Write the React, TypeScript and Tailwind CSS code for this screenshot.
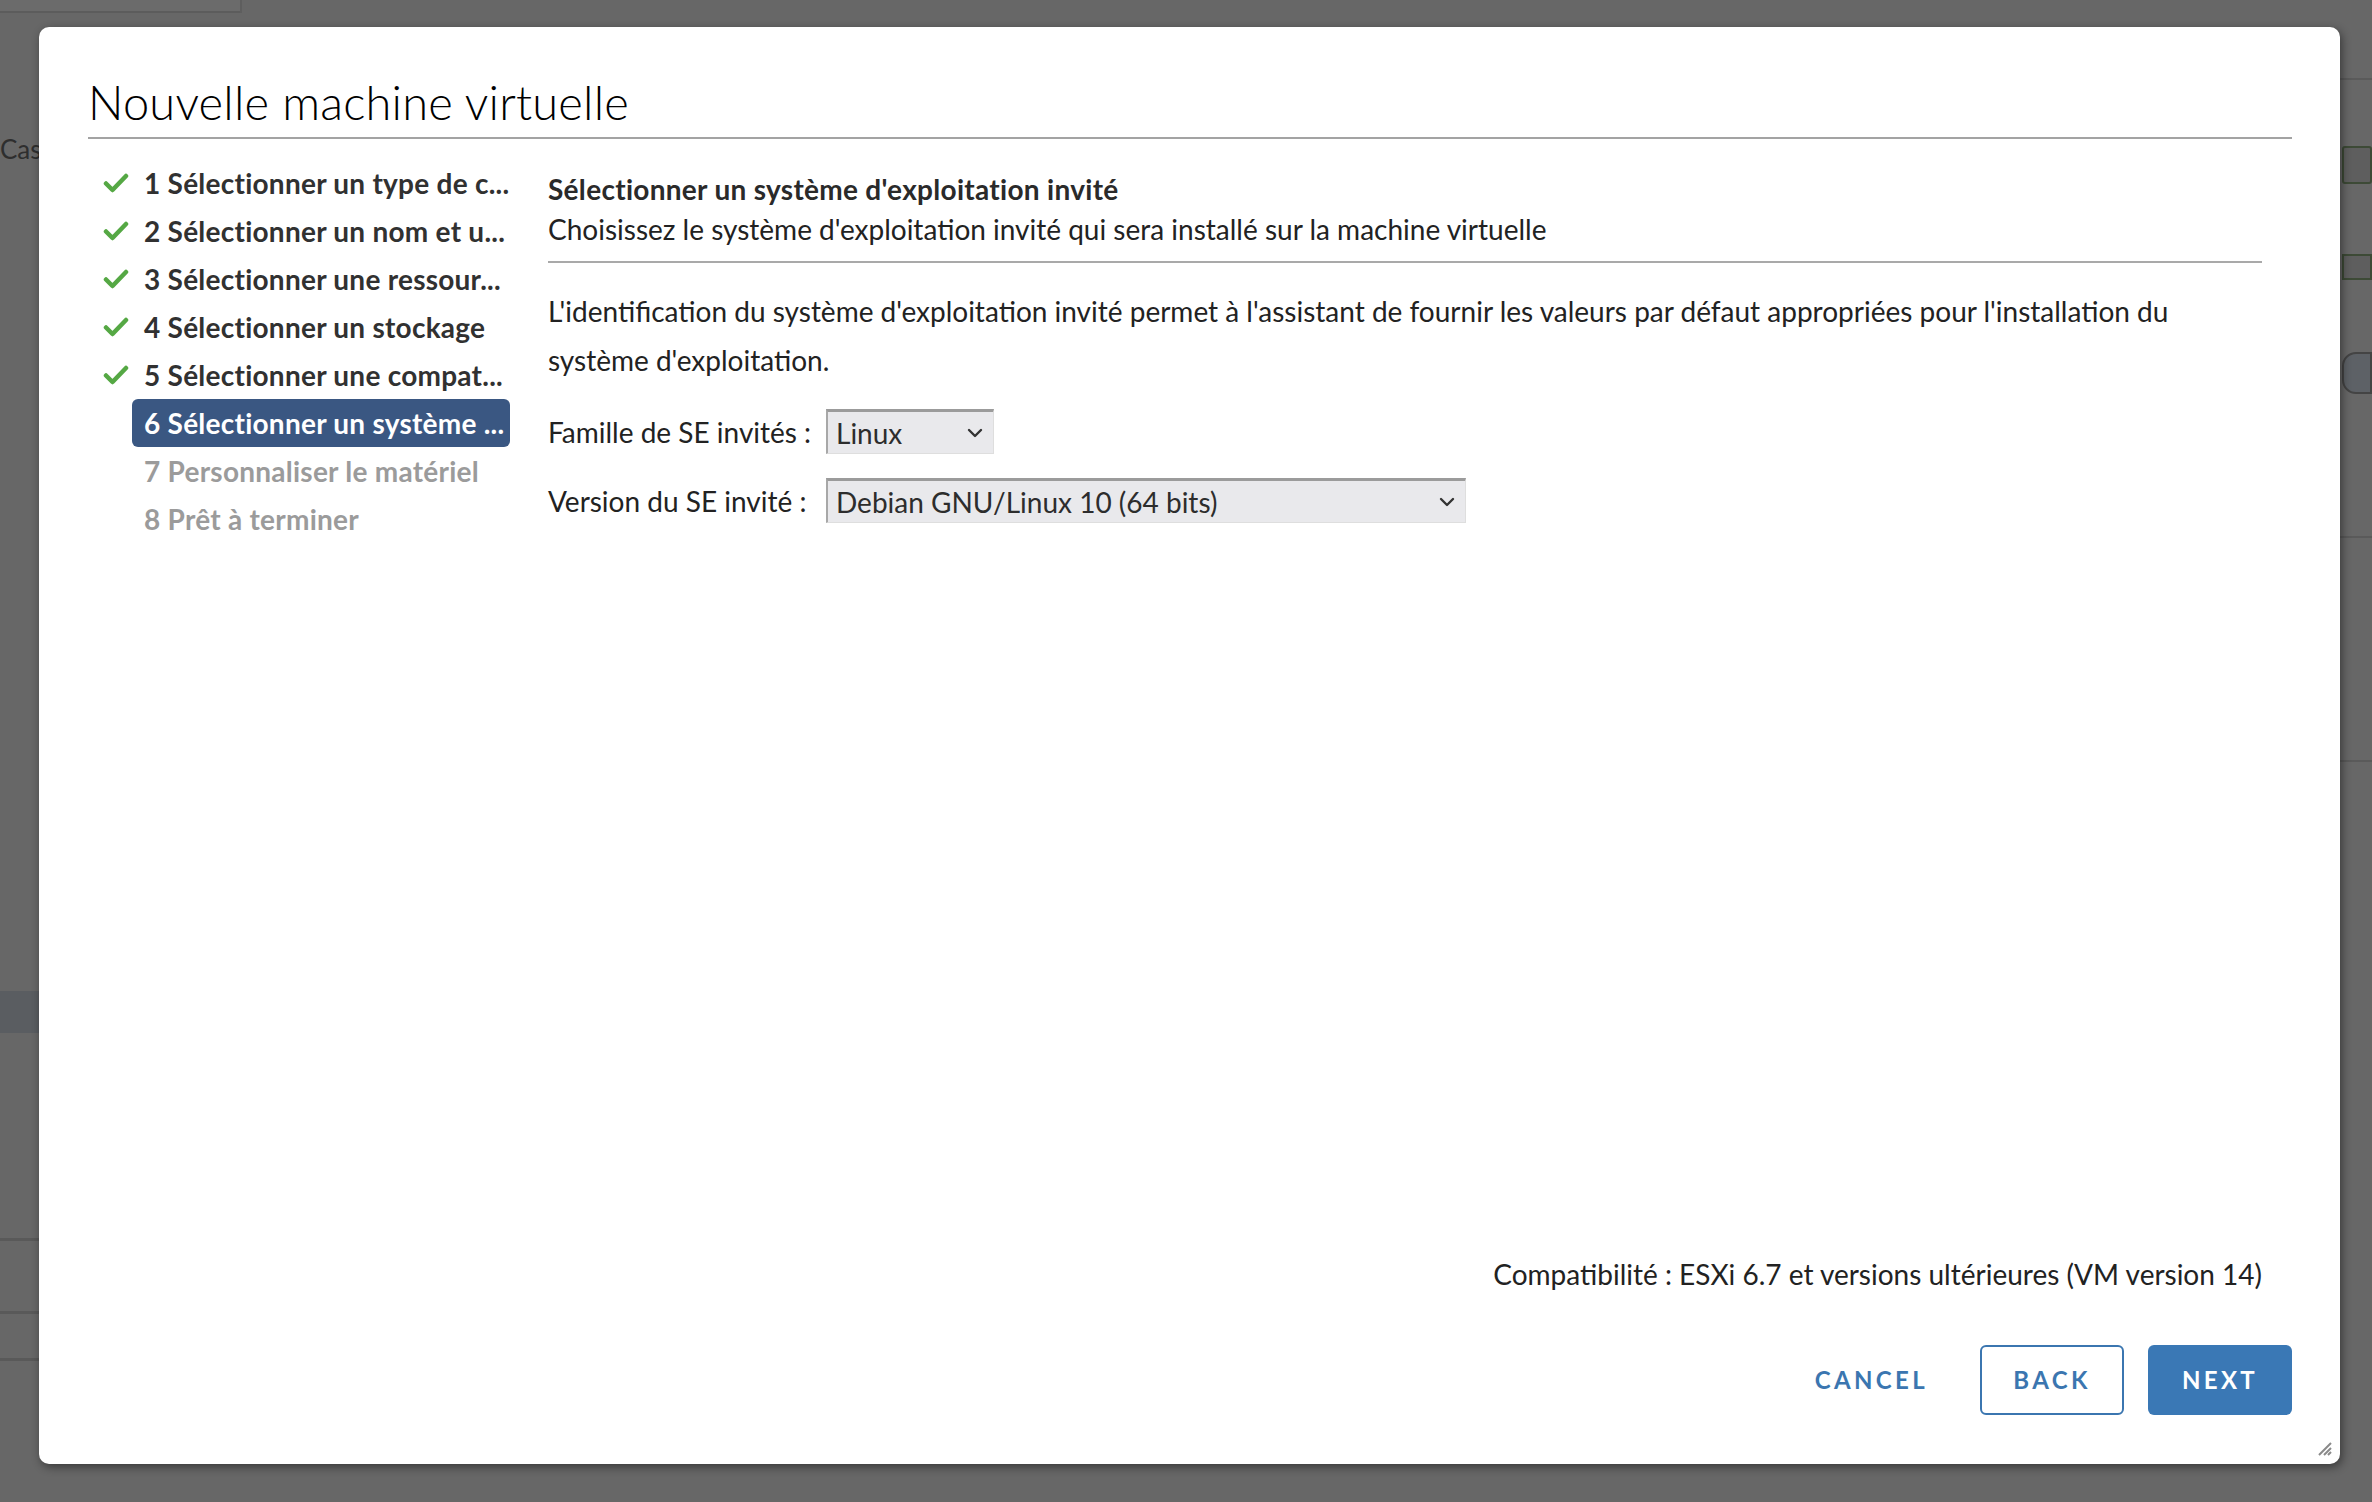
import React from 'react';

const steps = [
  { n: 1, label: 'Sélectionner un type de c...', state: 'done' },
  { n: 2, label: 'Sélectionner un nom et u...', state: 'done' },
  { n: 3, label: 'Sélectionner une ressour...', state: 'done' },
  { n: 4, label: 'Sélectionner un stockage', state: 'done' },
  { n: 5, label: 'Sélectionner une compat...', state: 'done' },
  { n: 6, label: 'Sélectionner un système ...', state: 'active' },
  { n: 7, label: 'Personnaliser le matériel', state: 'todo' },
  { n: 8, label: 'Prêt à terminer', state: 'todo' },
];

const Check = () => (
  <svg width="26" height="22" viewBox="0 0 26 22" fill="none">
    <path d="M3 11.5 L9.5 18 L23 4" stroke="#55a844" strokeWidth="4.5" strokeLinecap="round" strokeLinejoin="round" />
  </svg>
);

const Chevron = () => (
  <svg width="16" height="10" viewBox="0 0 16 10" fill="none">
    <path d="M2 2 L8 8 L14 2" stroke="#333" strokeWidth="2.4" strokeLinecap="round" strokeLinejoin="round" />
  </svg>
);

const FakeSelect = ({ value, width }: { value: string; width: string }) => (
  <div
    className={`${width} h-[45px] flex items-center justify-between pl-[8px] pr-[10px] bg-[#e9e9ec] border-t-[3px] border-l-[2px] border-r border-b border-t-[#9b9b9b] border-l-[#a8a8a8] border-r-[#dedede] border-b-[#dedede] text-[28px] text-[#2d2d2d]`}
  >
    <span>{value}</span>
    <Chevron />
  </div>
);

export default function App() {
  return (
    <div className="relative w-[2372px] h-[1502px] overflow-hidden bg-[#676767] font-['Lato','Liberation_Sans',sans-serif]">
      {/* dimmed page behind the dialog */}
      <div className="flex h-[13px]">
        <div className="w-[240px] bg-[#6b6b6b] border-b-2 border-[#5c5c5c]" />
        <div className="w-[2px] bg-[#5e5e5e]" />
      </div>
      <div className="absolute left-0 top-[130px] text-[26px] text-[#2e2e2e]">Cas-</div>
      <div className="absolute left-0 top-[991px] w-[40px] h-[42px] bg-[#5a5d61]" />
      <div className="absolute left-0 top-[1238px] w-[40px] h-[3px] bg-[#595959]" />
      <div className="absolute left-0 top-[1311px] w-[40px] h-[3px] bg-[#595959]" />
      <div className="absolute left-0 top-[1358px] w-[40px] h-[3px] bg-[#595959]" />
      <div className="absolute right-0 top-[78px] w-[32px] h-[2px] bg-[#5a5a5a]" />
      <div className="absolute right-0 top-[146px] w-[30px] h-[38px] border-2 border-[#3d4a36] bg-[#5e5e5e] rounded-[3px]" />
      <div className="absolute right-0 top-[254px] w-[30px] h-[26px] border-2 border-[#3d4a36] bg-[#5e5e5e]" />
      <div className="absolute right-0 top-[352px] w-[30px] h-[42px] rounded-l-[14px] border-2 border-[#444] bg-[#5d6166]" />
      <div className="absolute right-0 top-[536px] w-[32px] h-[2px] bg-[#5a5a5a]" />
      <div className="absolute right-0 top-[760px] w-[32px] h-[2px] bg-[#5a5a5a]" />

      {/* dialog */}
      <div className="absolute left-[39px] top-[27px] w-[2301px] h-[1437px] bg-white rounded-[10px] shadow-[2px_3px_10px_rgba(0,0,0,0.45)] flex flex-col pl-[49px] pr-[48px] pt-[46px] pb-[49px]">
        <div className="border-b-2 border-[#a3a3a3] pb-[6px]">
          <h1 className="text-[47px] font-light leading-[58px] text-black tracking-[0.2px]">Nouvelle machine virtuelle</h1>
        </div>

        <div className="flex flex-1 pt-[20px]">
          {/* steps */}
          <ul className="w-[422px] shrink-0 flex flex-col">
            {steps.map((s) => (
              <li key={s.n} className="flex items-center h-[48px]">
                <div className="w-[44px] flex items-center justify-end pr-[3px]">{s.state === 'done' && <Check />}</div>
                <div
                  className={`w-[378px] h-[48px] flex items-center pl-[12px] rounded-[6px] text-[28px] font-bold tracking-[0.25px] whitespace-nowrap overflow-hidden ${
                    s.state === 'active'
                      ? 'bg-[#3a5782] text-white'
                      : s.state === 'todo'
                      ? 'text-[#9b9b9b]'
                      : 'text-[#313131]'
                  }`}
                >
                  {s.n} {s.label}
                </div>
              </li>
            ))}
          </ul>

          {/* main panel */}
          <div className="flex-1 flex flex-col ml-[38px] mr-[30px] pt-[10px] text-[#222]">
            <div className="border-b-2 border-[#a9a9a9] pb-[12px]">
              <div className="text-[28px] font-bold tracking-[0.3px] leading-[40px] text-[#2a2a2a]">Sélectionner un système d'exploitation invité</div>
              <div className="text-[28px] leading-[40px]">Choisissez le système d'exploitation invité qui sera installé sur la machine virtuelle</div>
            </div>

            <p className="mt-[24px] text-[28px] leading-[49px]">
              L'identification du système d'exploitation invité permet à l'assistant de fournir les valeurs par défaut appropriées pour l'installation du système d'exploitation.
            </p>

            <div className="flex items-center gap-[12px] mt-[24px] text-[28px]">
              <span className="w-[266px] shrink-0 whitespace-nowrap">Famille de SE invités :</span>
              <FakeSelect value="Linux" width="w-[168px]" />
            </div>
            <div className="flex items-center gap-[12px] mt-[24px] text-[28px]">
              <span className="w-[266px] shrink-0 whitespace-nowrap">Version du SE invité :</span>
              <FakeSelect value="Debian GNU/Linux 10 (64 bits)" width="w-[640px]" />
            </div>

            <div className="mt-auto text-right text-[28px] text-[#222] pb-[2px]">
              Compatibilité : ESXi 6.7 et versions ultérieures (VM version 14)
            </div>
          </div>
        </div>

        {/* footer */}
        <div className="flex justify-end items-center gap-[24px] mt-[48px]">
          <button className="h-[70px] px-[28px] text-[24px] font-bold tracking-[0.14em] text-[#3b76b0]">CANCEL</button>
          <button className="h-[70px] w-[144px] rounded-[6px] border-2 border-[#3b76b0] text-[24px] font-bold tracking-[0.14em] text-[#3b76b0]">BACK</button>
          <button className="h-[70px] w-[144px] rounded-[6px] bg-[#3a78b5] text-[24px] font-bold tracking-[0.14em] text-white">NEXT</button>
        </div>

        {/* resize grip */}
        <svg className="absolute right-[8px] bottom-[8px]" width="16" height="16" viewBox="0 0 16 16">
          <path d="M15 3 L3 15 M15 8 L8 15 M15 12 L12 15" stroke="#8a8a8a" strokeWidth="2" />
        </svg>
      </div>
    </div>
  );
}
